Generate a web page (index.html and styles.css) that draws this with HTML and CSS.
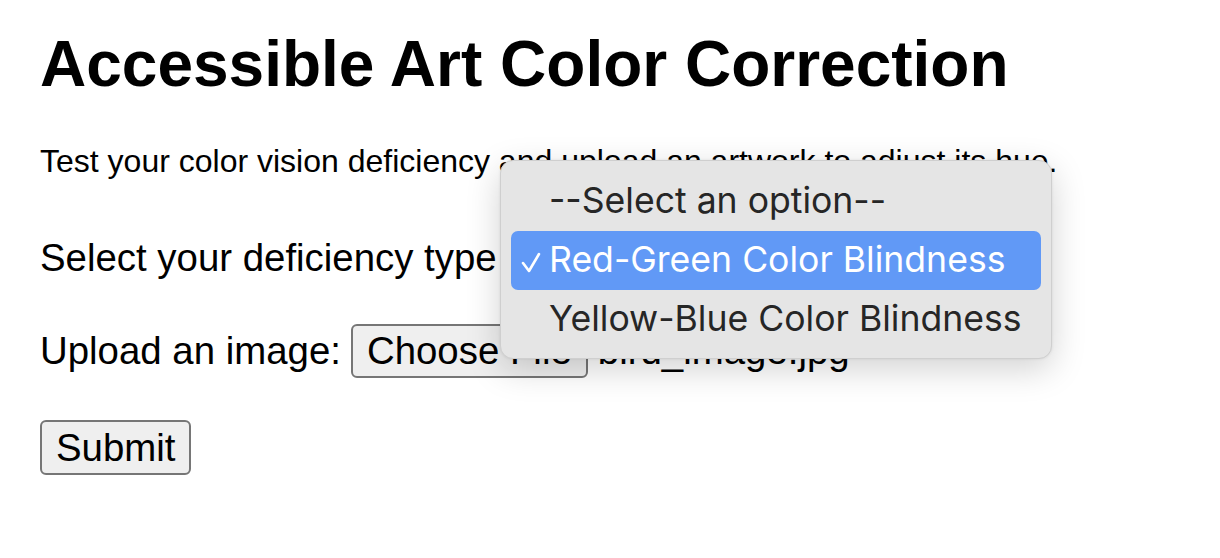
FILE: index.html
```html
<!DOCTYPE html>
<html lang="en">
<head>
<meta charset="utf-8">
<title>Accessible Art Color Correction</title>
<link rel="stylesheet" href="styles.css">
</head>
<body>
<h1 class="title">Accessible Art Color Correction</h1>
<p class="intro">Test your color vision deficiency and upload an artwork to adjust its hue.</p>
<form class="form">
  <div class="row row-select">
    <span class="label">Select your deficiency type</span>
    <span class="select-box">Red-Green Color Blindness</span>
  </div>
  <div class="row row-upload">
    <span class="label">Upload an image:</span>
    <span class="btn">Choose File</span>
    <span class="file-name">bird_image.jpg</span>
  </div>
  <div class="row-submit">
    <span class="btn">Submit</span>
  </div>
</form>
<div class="menu">
  <div class="menu-item">--Select an option--</div>
  <div class="menu-item is-selected">
    <svg class="check" width="20" height="22" viewBox="0 0 20 22"><polyline points="2,11 8,19 18,2" fill="none" stroke="#fff" stroke-width="2.6" stroke-linecap="round" stroke-linejoin="round"/></svg>
    Red-Green Color Blindness
  </div>
  <div class="menu-item">Yellow-Blue Color Blindness</div>
</div>
</body>
</html>
```
FILE: styles.css
```css
html, body {
  margin: 0;
  background: #fff;
}
body {
  padding: 27px 40px 0;
  font-family: "Liberation Sans", Arial, Helvetica, sans-serif;
  color: #000;
  position: relative;
  height: 558px;
  box-sizing: border-box;
  overflow: hidden;
}
.title {
  margin: 0;
  font-size: 64px;
  line-height: 74px;
  font-weight: 700;
}
.intro {
  margin: 42px 0 0;
  font-size: 32px;
  line-height: 37px;
  white-space: nowrap;
}
.form {
  font-size: 38.4px;
  line-height: 44px;
}
.row {
  display: flex;
  align-items: center;
  height: 54px;
}
.row-select {
  margin-top: 51px;
}
.row-upload {
  margin-top: 39px;
}
.label {
  white-space: nowrap;
}
.select-box {
  margin-left: 10px;
  white-space: nowrap;
}
.btn {
  display: inline-flex;
  align-items: center;
  box-sizing: border-box;
  height: 54px;
  padding: 0 14px;
  background: #efefef;
  border: 2px solid #767676;
  border-radius: 6px;
  white-space: nowrap;
}
.row-upload .btn {
  margin-left: 10px;
}
.file-name {
  margin-left: 10px;
  white-space: nowrap;
}
.row-submit {
  margin-top: 42px;
  display: flex;
}
.row-submit .btn {
  height: 55px;
  padding: 0 14px;
}
.menu {
  position: absolute;
  left: 500px;
  top: 160px;
  width: 552px;
  height: 199px;
  box-sizing: border-box;
  padding: 11px 10px;
  background: #e5e5e5;
  border: 1px solid #cfcfcf;
  border-radius: 13px;
  box-shadow: 0 10px 34px rgba(0, 0, 0, 0.18), 0 0 3px rgba(0, 0, 0, 0.08);
  font-family: Inter, "Noto Sans", sans-serif;
  font-size: 35.6px;
  color: #262626;
}
.menu-item {
  position: relative;
  height: 59px;
  line-height: 57px;
  padding-left: 38px;
  border-radius: 7px;
  white-space: nowrap;
}
.menu-item.is-selected {
  background: #6199f6;
  color: #fff;
}
.check {
  position: absolute;
  left: 10px;
  top: 21px;
}
```
